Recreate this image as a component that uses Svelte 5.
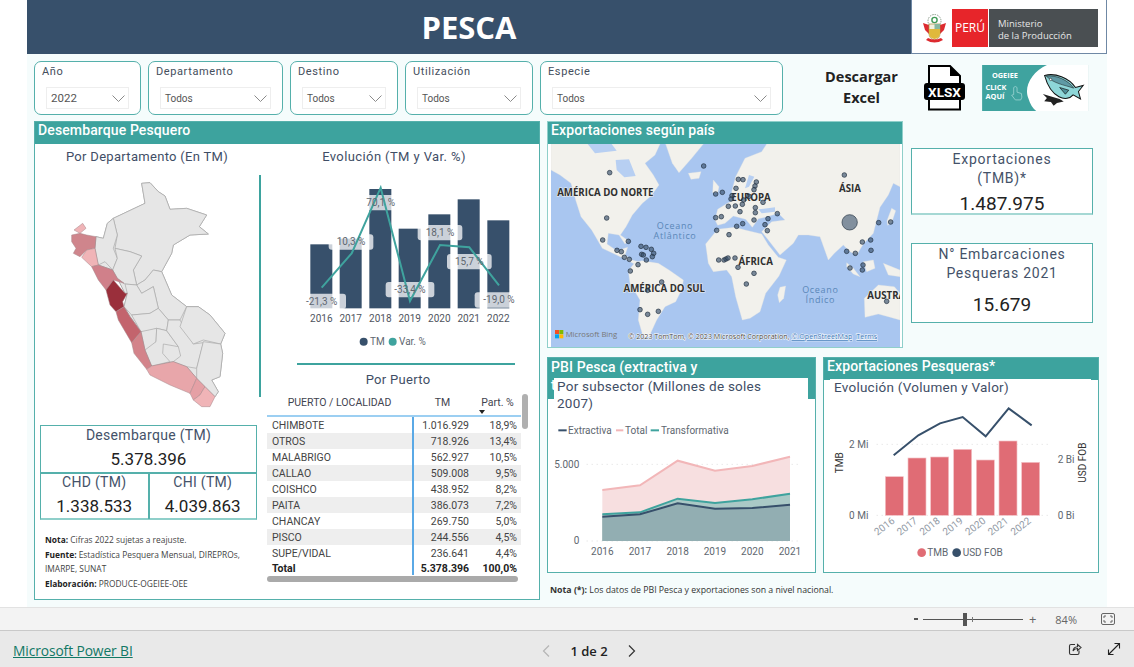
<script>
  // Data read off the report
  const filters = [
    { label: 'Año', value: '2022', w: 107, big: true },
    { label: 'Departamento', value: 'Todos', w: 135 },
    { label: 'Destino', value: 'Todos', w: 108 },
    { label: 'Utilización', value: 'Todos', w: 128 },
    { label: 'Especie', value: 'Todos', w: 243 }
  ];

  const peruOutline = '250,295 345,250 335,190 360,188 385,215 405,228 420,268 470,265 530,285 508,320 535,342 480,345 430,375 425,400 395,455 370,450 395,455 425,525 470,560 505,560 540,585 585,640 572,672 578,700 570,770 545,780 565,815 555,830 500,775 470,740 430,725 365,738 345,690 333,635 300,590 282,560 292,520 285,520 262,475 248,450 205,435 195,385 198,350 220,355 232,310';
  const grayDeps = [
    '250,295 345,250 335,190 360,188 385,215 405,228 420,268 470,265 530,285 508,320 535,342 480,345 430,375 425,400 395,455 370,450 345,480 320,495 310,450 335,408 300,395 255,385 262,345',
    '250,295 262,345 250,385 262,415 248,450 225,425 205,435 195,385 198,350 220,355 232,310',
    '255,385 300,395 335,408 310,450 320,495 285,492 262,475 248,450 262,415',
    '370,450 395,455 425,525 470,560 450,600 415,600 385,565 370,500 335,520 320,495 345,480',
    '285,492 320,495 335,520 370,500 385,565 360,580 305,585 282,560 292,520',
    '305,585 360,580 385,565 415,600 410,632 380,625 335,640 333,635',
    '333,635 380,625 378,665 355,700 345,690',
    '380,625 410,632 445,680 400,672 398,700 420,725 365,738 345,690 378,665',
    '415,600 450,600 490,672 520,668 500,745 470,740 430,725 452,708 445,680 410,632',
    '470,560 505,560 540,585 585,640 572,672 520,660 490,672 450,620',
    '520,665 572,672 578,700 570,770 545,780 565,815 555,830 525,800 500,775 500,745'
  ];
  const redDeps = [
    { c: '#f0b4b7', p: '132,330 158,310 168,325 150,340' },
    { c: '#cf858c', p: '125,345 150,340 170,345 198,350 195,385 170,390 150,410 130,400 138,385 125,365' },
    { c: '#f0b4b7', p: '170,390 195,385 205,435 185,440 155,412' },
    { c: '#d0808a', p: '185,440 205,435 248,450 262,475 282,490 250,480 228,510 205,480' },
    { c: '#9a2f3b', p: '250,480 285,520 292,520 278,545 282,560 258,575 240,555 228,510' },
    { c: '#c3646d', p: '258,575 282,560 300,590 333,635 305,668 265,600' },
    { c: '#d3838a', p: '305,668 333,635 345,690 365,738 350,748 312,700' },
    { c: '#e8a6aa', p: '350,748 365,738 430,725 470,740 500,775 480,820 420,795 360,765' },
    { c: '#e5a0a5', p: '500,775 525,800 510,825 490,840 480,820' },
    { c: '#f0b4b7', p: '490,840 510,825 525,800 555,830 540,860 515,860' }
  ];

  const tmYears = [2016, 2017, 2018, 2019, 2020, 2021, 2022];
  const tmBars = [
    { x: 151, top: 313 }, { x: 239, top: 296 }, { x: 328, top: 147 }, { x: 416, top: 266 },
    { x: 505, top: 223 }, { x: 593, top: 178 }, { x: 682, top: 241 }
  ];
  const varLine = '185,443 275,340 362,143 450,483 540,315 628,322 717,436';
  const varLabels = [
    { t: '-21,3 %', x: 185, y: 484, w: 146 }, { t: '10,3 %', x: 273, y: 306, w: 134 },
    { t: '70,1 %', x: 362, y: 188, w: 134 }, { t: '-33,4 %', x: 450, y: 449, w: 146 },
    { t: '18,1 %', x: 540, y: 278, w: 134 }, { t: '15,7 %', x: 628, y: 365, w: 134 },
    { t: '-19,0 %', x: 717, y: 480, w: 146 }
  ];

  const ports = [
    ['CHIMBOTE', '1.016.929', '18,9%'], ['OTROS', '718.926', '13,4%'], ['MALABRIGO', '562.927', '10,5%'],
    ['CALLAO', '509.008', '9,5%'], ['COISHCO', '438.952', '8,2%'], ['PAITA', '386.073', '7,2%'],
    ['CHANCAY', '269.750', '5,0%'], ['PISCO', '244.556', '4,5%'], ['SUPE/VIDAL', '236.641', '4,4%']
  ];

  const land = [
    'M18 72 L345 72 L330 105 L300 130 L325 165 L342 195 L318 228 L292 250 L262 285 L243 320 L226 345 L250 362 L240 372 L222 345 L190 340 L186 372 L215 392 L248 382 L240 405 L262 420 L290 428 L275 436 L250 422 L215 405 L172 385 L140 330 L108 290 L92 240 L78 190 L45 165 L18 150 Z',
    'M290 422 L340 430 L372 450 L415 480 L412 505 L392 545 L360 560 L335 600 L312 650 L295 652 L280 600 L285 540 L255 490 L250 452 L268 430 Z',
    'M362 72 L475 72 L440 115 L402 158 L382 130 Z',
    'M510 300 L518 268 L550 248 L572 238 L560 215 L572 170 L600 115 L650 95 L665 72 L1065 72 L1065 200 L1045 190 L1030 225 L1005 262 L985 340 L955 372 L935 405 L915 395 L895 375 L868 400 L850 420 L825 350 L790 345 L760 345 L745 370 L705 405 L670 360 L650 335 L680 305 L720 300 L700 280 L660 292 L640 296 L622 322 L602 298 L565 288 L540 310 L518 316 Z',
    'M482 372 L518 328 L570 322 L600 330 L650 342 L670 375 L700 412 L724 420 L702 468 L662 520 L645 575 L615 595 L592 600 L572 530 L560 470 L545 450 L505 455 L490 430 Z',
    'M705 502 L722 498 L716 535 L703 548 L698 525 Z',
    'M958 535 L1000 495 L1048 500 L1065 520 L1065 600 L1030 590 L1000 582 L960 592 Z',
    'M905 428 L925 445 L945 470 L925 462 L905 440 Z',
    'M955 425 L985 420 L990 445 L965 455 Z',
    'M1015 430 L1065 450 L1065 470 L1030 465 Z',
    'M505 180 L522 200 L518 218 L503 218 Z',
    'M1040 265 L1052 272 L1040 308 L1028 316 L1026 302 Z',
    'M430 160 L468 155 L462 175 L438 178 Z'
  ];
  const water = [
    'M212 120 L252 118 L272 168 L238 172 L215 150 Z',
    'M612 200 L628 170 L612 165 L600 205 Z',
    'M640 268 L690 262 L690 275 L650 280 Z',
    'M128 72 L200 72 L215 92 L150 100 Z'
  ];
  const dots = [
    [194,158],[476,138],[185,294],[173,360],[250,364],[216,391],[229,395],[288,379],[303,382],[319,388],[326,400],[322,410],[290,403],[295,405],[238,412],[253,418],[304,420],[279,434],[256,453],[350,486],[308,511],[285,569],[308,583],[340,574],
    [580,178],[594,179],[634,186],[630,198],[627,209],[573,205],[512,222],[532,217],[561,227],[558,237],[596,240],[612,229],[592,253],[654,247],[550,259],[571,258],[631,263],[631,278],[585,275],[512,293],[529,290],[627,300],[669,296],[697,281],[593,311],[575,319],[660,314],[667,332],[515,331],[552,344],
    [521,420],[537,420],[543,417],[549,414],[570,414],[579,442],[627,460],[604,492],
    [898,165],[1001,308],[1037,306],[977,360],[952,366],[905,394],[931,400],[978,391],[915,444],[954,435],[952,450],[1025,544]
  ];
  const continents = [
    { t: 'AMÉRICA DO NORTE', x: 181, y: 227 }, { t: 'ÁSIA', x: 915, y: 217 }, { t: 'EUROPA', x: 618, y: 242 },
    { t: 'ÁFRICA', x: 632, y: 434 }, { t: 'AMÉRICA DO SUL', x: 358, y: 516 }, { t: 'AUSTRA', x: 967, y: 537, start: true }
  ];

  const pbiX = [172, 285, 398, 510, 622, 735];
  const totalY = [405, 391, 317, 347, 333, 305];
  const transY = [478, 472, 431, 444, 433, 416];
  const extrY = [485, 478, 445, 461, 459, 449];
  const zip = (ys) => pbiX.map((x, i) => `${x},${ys[i]}`).join(' ');
  const area = (ys) => `${zip(ys)} 735,558 172,558`;

  const fobBars = [
    { x: 196, top: 362 }, { x: 264, top: 306 }, { x: 332, top: 303 }, { x: 401, top: 280 },
    { x: 469, top: 312 }, { x: 537, top: 255 }, { x: 605, top: 319 }
  ];
  const fobLine = '221,298 295,238 360,202 428,183 497,241 566,157 635,208';
</script>

<div class="page">
  <div class="canvas">
    <header class="banner">
      <h1>PESCA</h1>
      <div class="logo">
        <svg class="crest" viewBox="0 0 25 31">
          <circle cx="12.5" cy="8" r="6.5" fill="none" stroke="#8a9a8a" stroke-width="1" stroke-dasharray="1.5 1"/>
          <circle cx="12.5" cy="7" r="2.6" fill="none" stroke="#3f9a55" stroke-width="1.4"/>
          <path d="M1 10 L7 12 L7 21 L3 17 Z M24 10 L18 12 L18 21 L22 17 Z" fill="#dd2a2f"/>
          <path d="M7 11 H18 V20 Q18 26 12.5 27 Q7 26 7 20 Z" fill="#f4f1de" stroke="#a58a3c" stroke-width=".7"/>
          <path d="M7 16 H18 V20 Q18 25 12.5 26 Q7 25 7 20 Z" fill="#e0b93b"/>
          <path d="M12.5 11 H18 V16 H12.5 Z" fill="#88b8a0"/>
          <path d="M4 27 Q12.5 32 21 27 L19 25 Q12.5 28 6 25 Z" fill="#dd2a2f"/>
        </svg>
        <div class="peru">PERÚ</div>
        <div class="minis">Ministerio<br />de la Producción</div>
      </div>
    </header>

    <div class="filters">
      {#each filters as f}
        <div class="filter" style="width:{f.w}px">
          <div class="filter-label">{f.label}</div>
          <div class="select" class:big={f.big}>
            <span>{f.value}</span>
            <svg width="13" height="7" viewBox="0 0 13 7"><path d="M.5 .5 L6.5 6.5 L12.5 .5" fill="none" stroke="#8a8a8a"/></svg>
          </div>
        </div>
      {/each}
      <div class="download">Descargar<br />Excel</div>
      <svg class="xlsx" width="41" height="46" viewBox="0 0 41 46">
        <path d="M5 1 H26 L36 11 V44.5 H5 Z" fill="#fff" stroke="#000" stroke-width="2"/>
        <path d="M26 1 L36 11 H26 Z" fill="#000"/>
        <rect x="0" y="18" width="41" height="17" rx="3" fill="#000"/>
        <text x="20.5" y="31.5" text-anchor="middle" class="xlsx-text">XLSX</text>
      </svg>
      <svg class="ogeiee" width="107" height="46" viewBox="247 195 318 137">
        <rect x="247" y="195" width="318" height="137" fill="#3fa39f"/>
        <path d="M440 195 C395 215 370 260 385 295 C390 312 398 325 408 332 H565 V195 Z" fill="#fff"/>
        <text x="315" y="234" text-anchor="middle" class="og-text">OGEIEE</text>
        <text x="257" y="269" class="og-text">CLICK</text>
        <text x="257" y="296" class="og-text">AQUÍ</text>
        <path d="M341 262 Q346 256 351 262 V276 L364 280 Q368 292 362 299 H346 L335 285 L341 283 Z" fill="none" stroke="#9ad3d0" stroke-width="2.5"/>
        <path d="M428 281 L450 288 L478 296 L490 304 L470 308 L460 316 L452 305 L432 303 L440 293 Z" fill="#222"/>
        <path d="M433 226 C465 218 505 232 525 262 L548 256 L534 274 L540 296 L518 284 C500 306 452 296 433 226 Z" fill="#8ed6d8" stroke="#111" stroke-width="3"/>
        <path d="M438 228 C468 224 503 240 520 264 C490 254 460 250 438 228 Z" fill="#5f9aa5" stroke="#111" stroke-width="1.5"/>
        <path d="M478 262 L505 270 L495 282 Z" fill="#4f8f9a" stroke="#111" stroke-width="2"/>
        <circle cx="451" cy="238" r="3.5" fill="#fff" stroke="#111" stroke-width="1.5"/>
      </svg>
    </div>

    <div class="body">
      <section class="panel desembarque">
        <div class="panel-head">Desembarque Pesquero</div>
        <div class="des-body">
          <div class="des-left">
            <div class="sub-title">Por Departamento (En TM)</div>
            <svg class="peru-map" width="224" height="255" viewBox="15 150 672 765">
              <polygon points={peruOutline} fill="#e6e6e6" stroke="#9f9f9f" stroke-width="2.5" stroke-linejoin="round"/>
              {#each grayDeps as p}
                <polygon points={p} fill="#e6e6e6" stroke="#a8a8a8" stroke-width="2" stroke-linejoin="round"/>
              {/each}
              {#each redDeps as d}
                <polygon points={d.p} fill={d.c} stroke="#a5868a" stroke-width="1.5" stroke-linejoin="round"/>
              {/each}
            </svg>
            <div class="kpi-table">
              <div class="kpi-top">
                <div class="kpi-name">Desembarque (TM)</div>
                <div class="kpi-num">5.378.396</div>
              </div>
              <div class="kpi-row">
                <div class="kpi-cell">
                  <div class="kpi-name">CHD (TM)</div>
                  <div class="kpi-num">1.338.533</div>
                </div>
                <div class="kpi-cell">
                  <div class="kpi-name">CHI (TM)</div>
                  <div class="kpi-num">4.039.863</div>
                </div>
              </div>
            </div>
            <div class="notes">
              <b>Nota:</b> Cifras 2022 sujetas a reajuste.<br />
              <b>Fuente:</b> Estadística Pesquera Mensual, DIREPROs,<br />
              IMARPE, SUNAT<br />
              <b>Elaboración:</b> PRODUCE-OGEIEE-OEE
            </div>
          </div>

          <div class="des-right">
            <div class="sub-title evo">Evolución (TM y Var. %)</div>
            <div class="lined">
              <svg width="278" height="176" viewBox="3 105 834 528">
                {#each tmBars as b}
                  <rect x={b.x} y={b.top} width="66" height={505 - b.top} fill="#37506b"/>
                {/each}
                {#each varLabels as l}
                  <rect x={l.x - l.w / 2} y={l.y - 23} width={l.w} height="46" rx="9" fill="#fff" fill-opacity=".74"/>
                {/each}
                <polyline points={varLine} fill="none" stroke="#3fa39e" stroke-width="6"/>
                {#each varLabels as l}
                  <text x={l.x} y={l.y + 10} text-anchor="middle" class="chart-txt">{l.t}</text>
                {/each}
                {#each tmYears as y, i}
                  <text x={tmBars[i].x + 33} y="545" text-anchor="middle" class="chart-txt dark">{y}</text>
                {/each}
                <circle cx="311" cy="605" r="12" fill="#37506b"/>
                <text x="330" y="615" class="chart-txt">TM</text>
                <circle cx="398" cy="605" r="12" fill="#3fa39e"/>
                <text x="417" y="615" class="chart-txt">Var. %</text>
              </svg>
              <div class="teal-rule"></div>
              <div class="sub-title puerto">Por Puerto</div>
            </div>

            <div class="port-table">
              <div class="port-head">
                <span class="c1">PUERTO / LOCALIDAD</span>
                <span class="c2">TM</span>
                <span class="c3">Part. %</span>
                <i class="sort"></i>
              </div>
              {#each ports as r, i}
                <div class="port-row" class:alt={i % 2 === 1}>
                  <span class="c1 left">{r[0]}</span>
                  <span class="c2 num">{r[1]}</span>
                  <span class="c3 num">{r[2]}</span>
                </div>
              {/each}
              <div class="port-row total">
                <span class="c1 left">Total</span>
                <span class="c2 num">5.378.396</span>
                <span class="c3 num">100,0%</span>
              </div>
              <div class="vsep"></div>
              <div class="scroll-v"></div>
              <div class="scroll-h"></div>
            </div>
          </div>
        </div>
      </section>

      <div class="right">
        <div class="right-top">
          <section class="panel exports">
            <div class="panel-head">Exportaciones según país</div>
            <svg class="world" width="349" height="203" viewBox="18 72 1047 609">
              <rect x="18" y="72" width="1047" height="610" fill="#a9c6f0"/>
              {#each land as d}
                <path d={d} fill="#f2f1ec" stroke="#e3e4e2" stroke-width="1"/>
              {/each}
              {#each water as d}
                <path d={d} fill="#b7cff2"/>
              {/each}
              <text x="390" y="327" text-anchor="middle" class="ocean">Oceano</text>
              <text x="390" y="356" text-anchor="middle" class="ocean">Atlântico</text>
              <text x="826" y="519" text-anchor="middle" class="ocean">Oceano</text>
              <text x="826" y="549" text-anchor="middle" class="ocean">Índico</text>
              {#each continents as c}
                <text x={c.x} y={c.y} text-anchor={c.start ? 'start' : 'middle'} class="continent">{c.t}</text>
              {/each}
              {#each dots as d}
                <circle cx={d[0]} cy={d[1]} r="7" fill="#37506b" fill-opacity=".65" stroke="#22303f" stroke-width="2"/>
              {/each}
              <circle cx="914" cy="307" r="23" fill="#37506b" fill-opacity=".6" stroke="#22303f" stroke-width="2"/>
              <rect x="30" y="630" width="12" height="12" fill="#f25022"/>
              <rect x="43" y="630" width="12" height="12" fill="#7fba00"/>
              <rect x="30" y="643" width="12" height="12" fill="#00a4ef"/>
              <rect x="43" y="643" width="12" height="12" fill="#ffb900"/>
              <text x="62" y="650" class="bing">Microsoft Bing</text>
              <text x="250" y="657" class="attr">© 2023 TomTom, © 2023 Microsoft Corporation, <tspan class="attr-link">© OpenStreetMap</tspan><tspan dx="12" class="attr-link">Terms</tspan></text>
            </svg>
          </section>
          <div class="kpis">
            <div class="kpi-box one">
              <div class="kpi-name wide">Exportaciones<br />(TMB)*</div>
              <div class="kpi-big">1.487.975</div>
            </div>
            <div class="kpi-box two">
              <div class="kpi-name wide">N° Embarcaciones<br />Pesqueras 2021</div>
              <div class="kpi-big lower">15.679</div>
            </div>
          </div>
        </div>

        <div class="right-bottom">
          <section class="panel pbi">
            <div class="panel-head tall">PBI Pesca (extractiva y transformativa)</div>
            <div class="card">
              <div class="card-title">Por subsector (Millones de soles 2007)</div>
              <svg width="254" height="152" viewBox="27 195 762 456">
                <line x1="125" y1="328" x2="768" y2="328" class="grid-dot"/>
                <line x1="125" y1="558" x2="768" y2="558" class="grid-dot"/>
                <polygon points={area(totalY)} fill="#f7dfe0"/>
                <polygon points={area(transY)} fill="#aac9c6"/>
                <polygon points={area(extrY)} fill="#92aeb2"/>
                <polyline points={zip(totalY)} fill="none" stroke="#f2b6b8" stroke-width="6"/>
                <polyline points={zip(transY)} fill="none" stroke="#3fa39e" stroke-width="6"/>
                <polyline points={zip(extrY)} fill="none" stroke="#37506b" stroke-width="6"/>
                <line x1="40" y1="226" x2="65" y2="226" stroke="#37506b" stroke-width="6"/>
                <text x="69" y="236" class="chart-txt">Extractiva</text>
                <line x1="213" y1="226" x2="235" y2="226" stroke="#f2b6b8" stroke-width="6"/>
                <text x="240" y="236" class="chart-txt">Total</text>
                <line x1="317" y1="226" x2="342" y2="226" stroke="#3fa39e" stroke-width="6"/>
                <text x="348" y="236" class="chart-txt">Transformativa</text>
                <text x="103" y="338" text-anchor="end" class="chart-txt">5.000</text>
                <text x="103" y="568" text-anchor="end" class="chart-txt">0</text>
                {#each pbiX as x, i}
                  <text x={x} y="600" text-anchor="middle" class="chart-txt">{2016 + i}</text>
                {/each}
              </svg>
            </div>
          </section>

          <section class="panel fob">
            <div class="panel-head">Exportaciones Pesqueras*</div>
            <div class="card">
              <div class="card-title">Evolución (Volumen y Valor)</div>
              <svg width="263" height="176" viewBox="30 123 789 528">
                <line x1="170" y1="265" x2="690" y2="265" class="grid-dot"/>
                <line x1="170" y1="478" x2="690" y2="478" class="grid-dot"/>
                {#each fobBars as b}
                  <rect x={b.x} y={b.top} width="54" height={478 - b.top} fill="#e06c75" stroke="#f3c2c6" stroke-width="2"/>
                {/each}
                <polyline points={fobLine} fill="none" stroke="#37506b" stroke-width="6"/>
                <text x="145" y="275" text-anchor="end" class="chart-txt">2 Mi</text>
                <text x="145" y="488" text-anchor="end" class="chart-txt">0 Mi</text>
                <text x="713" y="321" class="chart-txt">2 Bi</text>
                <text x="713" y="488" class="chart-txt">0 Bi</text>
                <text transform="translate(69 320) rotate(-90)" text-anchor="middle" class="chart-txt black">TMB</text>
                <text transform="translate(798 320) rotate(-90)" text-anchor="middle" class="chart-txt black">USD FOB</text>
                {#each tmYears as y, i}
                  <text transform="translate({fobBars[i].x + 30} 498) rotate(-38)" text-anchor="end" class="chart-txt pale">{y}</text>
                {/each}
                <circle cx="305" cy="590" r="13" fill="#e06c75"/>
                <text x="322" y="600" class="chart-txt">TMB</text>
                <circle cx="410" cy="590" r="13" fill="#37506b"/>
                <text x="428" y="600" class="chart-txt">USD FOB</text>
              </svg>
            </div>
          </section>
        </div>

        <div class="note-star"><b>Nota (*):</b> Los datos de PBI Pesca y exportaciones son a nivel nacional.</div>
      </div>
    </div>
  </div>

  <div class="zoom-bar">
    <span class="minus"></span>
    <div class="slider"><i class="tick"></i><i class="thumb"></i></div>
    <span class="plus">+</span>
    <span class="pct">84%</span>
    <svg class="fit" width="14" height="12" viewBox="0 0 14 12">
      <rect x=".5" y=".5" width="13" height="11" rx="1.5" fill="none" stroke="#666"/>
      <path d="M3 5 V3 H5 M9 3 H11 V5 M11 7 V9 H9 M5 9 H3 V7" fill="none" stroke="#666"/>
    </svg>
  </div>

  <footer class="pager-bar">
    <a class="brand" href="#top">Microsoft Power BI</a>
    <div class="pager">
      <svg width="8" height="12" viewBox="0 0 8 12"><path d="M7 .5 L1.5 6 L7 11.5" fill="none" stroke="#b5b5b5" stroke-width="1.2"/></svg>
      <span>1 de 2</span>
      <svg width="8" height="12" viewBox="0 0 8 12"><path d="M1 .5 L6.5 6 L1 11.5" fill="none" stroke="#333" stroke-width="1.2"/></svg>
    </div>
    <div class="tools">
      <svg width="14" height="14" viewBox="0 0 14 14">
        <path d="M7 2.5 H3 Q1.5 2.5 1.5 4 V11 Q1.5 12.5 3 12.5 H9.5 Q11 12.5 11 11 V8.5" fill="none" stroke="#333" stroke-width="1.1"/>
        <path d="M5 9 Q5.5 5 9.5 4.8 V2.5 L13 5.6 L9.5 8.5 V6.5 Q6.5 6.5 5 9 Z" fill="none" stroke="#333" stroke-width="1.1"/>
      </svg>
      <svg width="14" height="14" viewBox="0 0 14 14">
        <path d="M1.5 12.5 L12.5 1.5 M7.5 1.5 H12.5 V6.5 M1.5 7.5 V12.5 H6.5" fill="none" stroke="#222" stroke-width="1.1"/>
      </svg>
    </div>
  </footer>
</div>

<style>
  :global(body) {
    margin: 0;
    background: #fff;
    font-family: Roboto, "Noto Sans", sans-serif;
  }

  .page {
    width: 1134px;
    height: 667px;
    overflow: hidden;
    display: flex;
    flex-direction: column;
  }

  .canvas {
    width: 1080px;
    height: 607px;
    margin-left: 27px;
    background: #f5fcfc;
    flex: none;
  }

  /* Banner */
  .banner {
    height: 54px;
    background: #37506b;
    display: flex;
  }

  h1 {
    flex: 1;
    margin: 0;
    text-align: center;
    color: #fff;
    font: 700 31px/54px "Open Sans", sans-serif;
  }

  .logo {
    width: 196px;
    box-sizing: border-box;
    background: #fff;
    border: 1px solid #6f88a5;
    border-top: none;
    padding: 9px 8px 6px 10px;
    display: flex;
    align-items: stretch;
  }

  .crest {
    width: 25px;
    height: 31px;
    margin: 4px 5px 0 0;
  }

  .peru {
    width: 36px;
    background: #e7252a;
    color: #fff;
    font: 12px/38px "Open Sans", sans-serif;
    text-align: center;
    margin-right: 1px;
  }

  .minis {
    flex: 1;
    background: #4a4f52;
    color: #e6e6e6;
    font: 9.5px/12px "Open Sans", sans-serif;
    padding: 9px 0 0 9px;
  }

  /* Filter row */
  .filters {
    height: 54px;
    margin-top: 7px;
    padding-left: 7px;
    display: flex;
    gap: 7px;
    position: relative;
  }

  .filter {
    box-sizing: border-box;
    background: #fff;
    border: 1px solid #55b0ab;
    border-radius: 7px;
    padding: 3px 11px 0;
  }

  .filter-label {
    font-size: 11px;
    line-height: 14px;
    letter-spacing: .6px;
    color: #444e5c;
    margin-left: -4px;
  }

  .select {
    height: 22px;
    margin-top: 8px;
    border: 1px solid #eee;
    box-sizing: border-box;
    display: flex;
    align-items: center;
    justify-content: space-between;
    padding: 0 3px 0 4px;
    font-size: 10px;
    color: #555;
  }

  .select.big {
    font-size: 11.5px;
  }

  .download {
    position: absolute;
    left: 798px;
    top: 5px;
    width: 73px;
    text-align: center;
    font: 700 14.5px/21px "Open Sans", sans-serif;
    color: #222;
  }

  .xlsx {
    position: absolute;
    left: 897px;
    top: 4px;
  }

  .xlsx-text {
    font: 700 13.5px Roboto, sans-serif;
    fill: #fff;
  }

  .ogeiee {
    position: absolute;
    left: 955px;
    top: 4px;
  }

  .og-text {
    font: 700 22px "Open Sans", sans-serif;
    fill: #fff;
  }

  /* Panels */
  .body {
    display: flex;
    margin-top: 6px;
    padding-left: 7px;
    gap: 7px;
  }

  .panel {
    box-sizing: border-box;
    background: #fff;
    border: 1px solid #55b0ab;
    position: relative;
    flex: none;
  }

  .panel-head {
    height: 22px;
    background: #3da39e;
    color: #fff;
    font-size: 14px;
    font-weight: 500;
    letter-spacing: .12px;
    line-height: 17px;
    padding-left: 3px;
    overflow: hidden;
  }

  .panel-head.tall {
    height: 41px;
    padding-right: 70px;
    line-height: 18px;
  }

  .desembarque {
    width: 506px;
    height: 479px;
  }

  .des-body {
    display: flex;
  }

  .des-left {
    width: 224px;
    flex: none;
  }

  .sub-title {
    height: 26px;
    font-size: 13px;
    line-height: 26px;
    letter-spacing: .3px;
    text-align: center;
    color: #3f4e66;
  }

  .sub-title.evo {
    height: 31px;
    width: 270px;
    line-height: 25px;
    letter-spacing: .4px;
  }

  .peru-map {
    display: block;
  }

  .kpi-table {
    box-sizing: border-box;
    width: 217px;
    height: 95px;
    margin-left: 5px;
    background: #fff;
    border: 1px solid #55b0ab;
    border-bottom: 2px solid #8fcfca;
  }

  .kpi-top {
    height: 46px;
    border-bottom: 2px solid #55b0ab;
    text-align: center;
  }

  .kpi-row {
    display: flex;
    height: 45px;
    text-align: center;
  }

  .kpi-cell {
    flex: 1;
  }

  .kpi-cell .kpi-name {
    margin-top: -1px;
  }

  .kpi-cell + .kpi-cell {
    border-left: 2px solid #55b0ab;
  }

  .kpi-name {
    font-size: 14px;
    line-height: 19px;
    letter-spacing: .3px;
    color: #445269;
  }

  .kpi-num {
    font-size: 17px;
    line-height: 24px;
    color: #222;
    margin-top: 2px;
  }

  .notes {
    margin: 13px 0 0 10px;
    font: 8.4px/14.5px "Open Sans", sans-serif;
    color: #444;
    white-space: nowrap;
  }

  .notes b {
    color: #222;
  }

  .des-right {
    flex: 1;
  }

  .lined {
    border-left: 2px solid #3da39e;
    height: 222px;
    margin-bottom: -3px;
  }

  .lined svg {
    display: block;
  }

  .teal-rule {
    height: 2px;
    width: 218px;
    margin: 12px 0 0 36px;
    background: #3da39e;
  }

  .sub-title.puerto {
    width: 274px;
    line-height: 30px;
  }

  .port-table {
    position: relative;
    margin-left: 8px;
    width: 254px;
    padding-bottom: 7px;
  }

  .port-head {
    height: 23px;
    box-sizing: border-box;
    padding-bottom: 5px;
    display: flex;
    align-items: center;
    border-bottom: 2px solid #9ccff2;
    font-size: 10.5px;
    color: #3f4450;
    text-align: center;
    position: relative;
  }

  .port-head .c2 {
    padding-left: 4px;
    box-sizing: border-box;
  }

  .port-head .c3 {
    padding-left: 9px;
    box-sizing: border-box;
    white-space: nowrap;
  }

  .port-row {
    height: 16px;
    display: flex;
    align-items: center;
    font-size: 10.5px;
    color: #444;
  }

  .port-row.alt {
    background: #eee;
  }

  .port-row.total {
    height: 14px;
    font-weight: 700;
    color: #222;
  }

  .c1 { width: 145px; flex: none; }
  .c2 { width: 57px; flex: none; }
  .c3 { width: 48px; flex: none; }

  .left { padding-left: 5px; box-sizing: border-box; }
  .num { text-align: right; }

  .sort {
    position: absolute;
    left: 212px;
    top: 16px;
    border: 3.5px solid transparent;
    border-top: 4px solid #222;
    border-bottom: none;
  }

  .vsep {
    position: absolute;
    left: 145px;
    top: 23px;
    bottom: 7px;
    width: 1.5px;
    background: #5aa9e6;
  }

  .scroll-v {
    position: absolute;
    right: -7px;
    top: 0;
    width: 6px;
    height: 35px;
    border-radius: 3px;
    background: #b0b0b0;
  }

  .scroll-h {
    position: absolute;
    left: 0;
    bottom: 0;
    width: 251px;
    height: 6px;
    border-radius: 3px;
    background: #aaa;
  }

  .right-top {
    display: flex;
    gap: 8px;
  }

  .exports {
    width: 356px;
    height: 227px;
    border-color: #8fcfca;
  }

  .world {
    display: block;
    margin-left: 3px;
  }

  .ocean {
    font: 27px "Open Sans", sans-serif;
    letter-spacing: 2px;
    fill: #5a86b8;
  }

  .continent {
    font: 700 29px "Open Sans", sans-serif;
    fill: #2f2f2f;
    stroke: #f2f1ec;
    stroke-width: 3px;
    paint-order: stroke;
  }

  .bing {
    font: 23px "Open Sans", sans-serif;
    fill: #777;
  }

  .attr {
    font: 21.5px "Open Sans", sans-serif;
    fill: #444;
    stroke: #fff;
    stroke-width: 3px;
    paint-order: stroke;
  }

  .attr-link {
    fill: #2f6fb5;
    text-decoration: underline;
  }

  .kpis {
    width: 182px;
  }

  .kpi-box {
    box-sizing: border-box;
    background: #fff;
    border: 1px solid #55b0ab;
    text-align: center;
  }

  .kpi-box.one {
    height: 67px;
    margin-top: 27px;
    border-bottom: 2px solid #a5d8d4;
  }

  .kpi-box.two {
    height: 80px;
    margin-top: 28px;
  }

  .kpi-name.wide {
    padding-top: 1px;
    letter-spacing: .75px;
  }

  .kpi-big {
    font-size: 19px;
    line-height: 26px;
    color: #222;
    margin-top: 3px;
  }

  .kpi-big.lower {
    margin-top: 9px;
  }

  .right-bottom {
    display: flex;
    gap: 7px;
    margin-top: 9px;
  }

  .pbi {
    width: 269px;
    height: 216px;
  }

  .fob {
    width: 276px;
    height: 216px;
  }

  /* White card sits on top of the wrapped header, like the report's visual */
  .card {
    position: absolute;
    left: 6px;
    right: 7px;
    top: 20px;
    bottom: 0;
    background: #fff;
  }

  .fob .card {
    top: 21px;
  }

  .card svg {
    display: block;
  }

  .card-title {
    font-size: 13.5px;
    line-height: 17px;
    letter-spacing: .25px;
    color: #3f4e66;
    padding: 0 30px 0 3px;
    margin-bottom: 8px;
    height: 34px;
    box-sizing: border-box;
  }

  .fob .card-title {
    height: 18px;
    margin-bottom: 0;
    padding-left: 4px;
  }

  .chart-txt {
    font: 30px Roboto, sans-serif;
    fill: #606770;
  }

  .chart-txt.dark {
    fill: #505560;
  }

  .chart-txt.black {
    fill: #333;
  }

  .chart-txt.pale {
    fill: #929aa5;
  }

  .grid-dot {
    stroke: #ddd;
    stroke-width: 3;
    stroke-dasharray: 3 12;
  }

  .note-star {
    font: 8.75px/12px "Open Sans", sans-serif;
    color: #333;
    margin: 11px 0 0 3px;
  }

  /* Bottom chrome */
  .zoom-bar {
    box-sizing: border-box;
    height: 23px;
    flex: none;
    background: #f3f3f3;
    border-top: 1px solid #e2e2e2;
    display: flex;
    align-items: center;
    justify-content: flex-end;
    padding-right: 19px;
    color: #666;
  }

  .minus {
    width: 4px;
    height: 2px;
    background: #555;
    margin-right: 5px;
  }

  .slider {
    width: 100px;
    height: 1px;
    background: #555;
    position: relative;
  }

  .thumb {
    position: absolute;
    left: 40px;
    top: -6px;
    width: 4px;
    height: 13px;
    background: #555;
  }

  .tick {
    position: absolute;
    left: 49px;
    top: -2px;
    width: 1px;
    height: 5px;
    background: #777;
  }

  .plus {
    font: 13px "Open Sans", sans-serif;
    margin: 0 19px 0 6px;
  }

  .pct {
    font: 11px "Open Sans", sans-serif;
    margin-right: 24px;
  }

  .pager-bar {
    box-sizing: border-box;
    height: 37px;
    flex: none;
    background: #e9e9e9;
    border-top: 1px solid #c9c9c9;
    display: flex;
    align-items: center;
    position: relative;
    padding: 3px 13px 0;
    justify-content: space-between;
  }

  .brand {
    font: 13.8px "Open Sans", sans-serif;
    color: #117865;
    text-decoration: underline;
    letter-spacing: -.1px;
  }

  .pager {
    position: absolute;
    left: 542px;
    width: 94px;
    display: flex;
    align-items: center;
    justify-content: space-between;
    font: 600 13px "Open Sans", sans-serif;
    color: #222;
  }

  .tools {
    display: flex;
    gap: 25px;
    margin-top: -3px;
  }
</style>
